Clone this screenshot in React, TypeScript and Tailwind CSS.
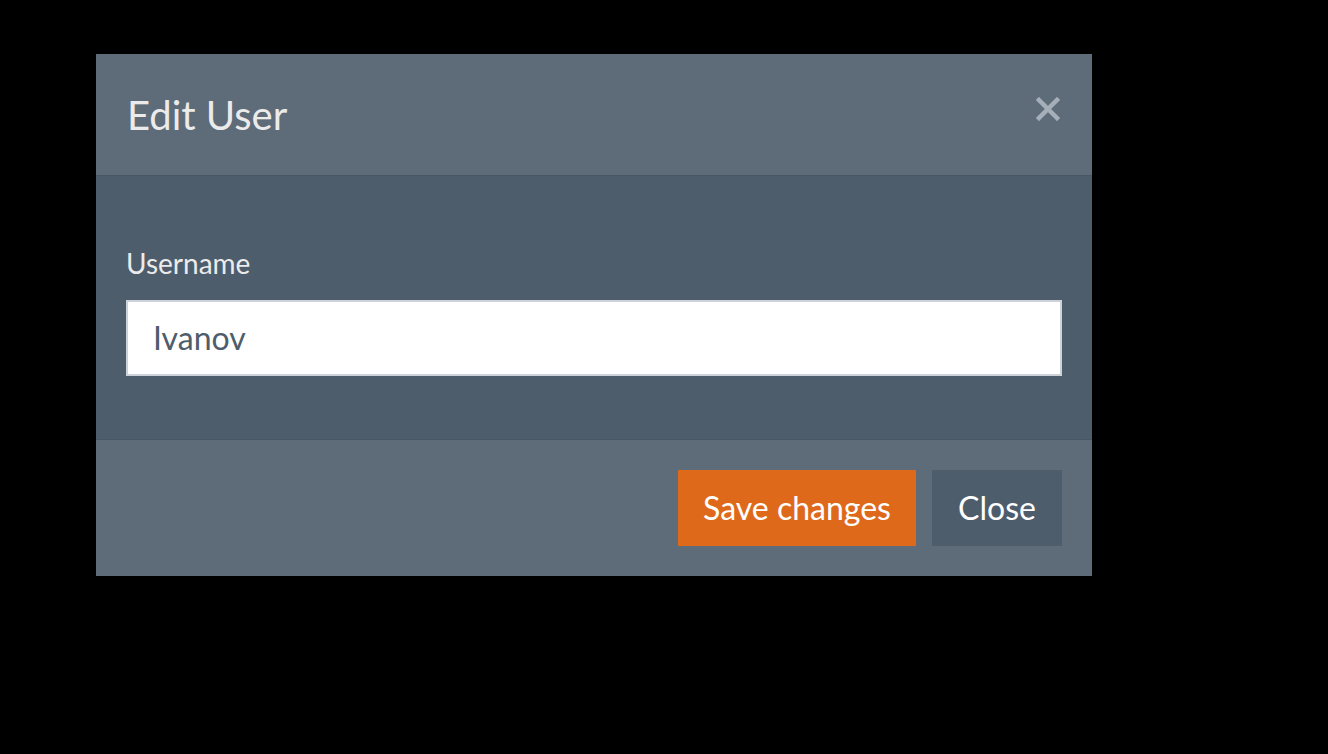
import React from "react";

export default function App() {
  return (
    <div className="w-[1328px] h-[754px] bg-black relative" style={{ fontFamily: "Lato, 'Open Sans', sans-serif" }}>
      <div className="absolute left-[96px] top-[54px] w-[996px] flex flex-col bg-[#4e5d6c]">
        <div className="h-[122px] bg-[#5e6b79] border-b border-[#485563] flex items-center justify-between pl-[31px] pr-[31px]">
          <h4 className="text-[40px] leading-none text-[#ebebeb] font-normal">Edit User</h4>
          <button className="text-[#a5afb9] w-[26px] h-[26px] -mt-[12px] flex items-center justify-center">
            <svg width="24" height="24" viewBox="0 0 24 24">
              <path d="M3 3 L21 21 M21 3 L3 21" stroke="currentColor" strokeWidth="4.5" strokeLinecap="square" />
            </svg>
          </button>
        </div>
        <div className="h-[263px] px-[30px] pt-[73px] flex flex-col">
          <label className="text-[28px] leading-none text-[#ebebeb] mb-[23px]">Username</label>
          <div className="h-[76px] w-[936px] bg-white border-2 border-[#cdd2d9] flex items-center pl-[25px]">
            <span className="text-[32px] text-[#4e5d6c] leading-none">Ivanov</span>
          </div>
        </div>
        <div className="h-[137px] bg-[#5e6b79] border-t border-[#485563] flex items-start justify-end gap-[16px] pt-[30px] pr-[30px]">
          <button className="h-[76px] w-[238px] bg-[#df691a] text-white text-[32px] leading-none">Save changes</button>
          <button className="h-[76px] w-[130px] bg-[#4e5d6c] text-white text-[32px] leading-none">Close</button>
        </div>
      </div>
    </div>
  );
}
